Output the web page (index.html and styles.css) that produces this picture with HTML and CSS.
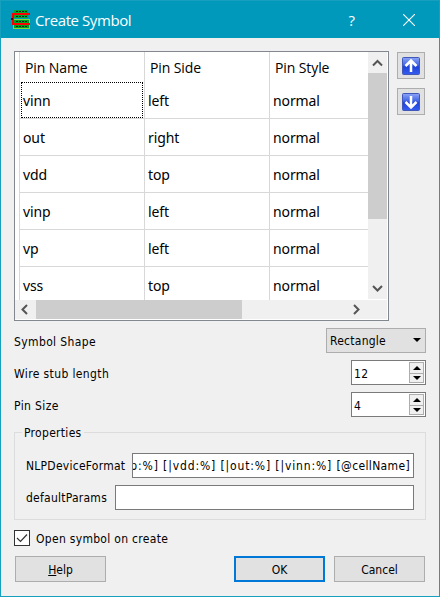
FILE: index.html
```
<!DOCTYPE html>
<html lang="en">
<head>
<meta charset="utf-8">
<title>Create Symbol</title>
<link rel="stylesheet" href="styles.css">
</head>
<body>
<div class="window">
  <header class="titlebar">
    <svg class="logo" width="19" height="20" viewBox="0 0 19 20" shape-rendering="crispEdges">
      <path fill="#00a82d" d="M3 0h14v8H3z"/><path fill="#80d940" d="M2 9h17v10H2z"/><path fill="#00a020" d="M3 10h15v8H3z"/>
      <path stroke="#222" stroke-width="1" stroke-dasharray="2 1" d="M5 1.500h11M5 6.500h11M5 11.500h11M5 16.500h11"/>
      <path fill="none" stroke="#f00" stroke-width="2" d="M19 4H2v10h17"/><path fill="#600" d="M0 8h2v2H0z"/>
    </svg>
    <h1>Create Symbol</h1>
    <span class="question">?</span>
    <svg class="close" width="12" height="12" viewBox="0 0 12 12"><path d="M0 0l12 12M12 0L0 12" stroke="#fff" stroke-width="1.1"/></svg>
  </header>
  <main>
    <section class="pins">
      <div class="list">
        <div class="grid">
          <div class="head">Pin Name</div><div class="head">Pin Side</div><div class="head">Pin Style</div>
          <div class="current">vinn</div><div>left</div><div>normal</div>
          <div>out</div><div>right</div><div>normal</div>
          <div>vdd</div><div>top</div><div>normal</div>
          <div>vinp</div><div>left</div><div>normal</div>
          <div>vp</div><div>left</div><div>normal</div>
          <div>vss</div><div>top</div><div>normal</div>
        </div>
        <div class="vscroll">
          <svg width="19" height="21"><path d="M5 13.500l4.500-4.500 4.500 4.500"/></svg>
          <div class="thumb"></div>
          <svg class="end" width="19" height="21"><path d="M5 8l4.500 4.500L14 8"/></svg>
        </div>
        <div class="hscroll">
          <svg width="21" height="19"><path d="M12 5L7.500 9.500 12 14"/></svg>
          <div class="thumb"></div>
          <svg class="end" width="21" height="19"><path d="M7 5l4.500 4.500L7 14"/></svg>
        </div>
        <div class="corner"></div>
      </div>
      <div class="movers">
        <button><svg width="18" height="18" viewBox="0 0 18 18"><defs><linearGradient id="blue" x2="0" y2="1"><stop stop-color="#8ca5f5"/><stop offset=".45" stop-color="#4264e5"/><stop offset=".55" stop-color="#1d43d8"/><stop offset="1" stop-color="#365cf0"/></linearGradient></defs><rect x=".5" y=".5" width="17" height="17" rx="1" fill="url(#blue)" stroke="#4058b8"/><path class="arrow" d="M9 15V4M3.500 9L9 3.500 14.500 9"/></svg></button>
        <button><svg width="18" height="18" viewBox="0 0 18 18"><rect x=".5" y=".5" width="17" height="17" rx="1" fill="url(#blue)" stroke="#4058b8"/><path class="arrow" d="M9 3v11M3.500 9L9 14.500 14.500 9"/></svg></button>
      </div>
    </section>
    <div class="row"><span>Symbol Shape</span><div class="combo"><span>Rectangle</span><svg width="8" height="4"><path d="M0 0h8L4 4z"/></svg></div></div>
    <div class="row"><span>Wire stub length</span><div class="spin"><span>12</span><div class="steps"><i><svg width="8" height="4"><path d="M0 4h8L4 0z"/></svg></i><i><svg width="8" height="4"><path d="M0 0h8L4 4z"/></svg></i></div></div></div>
    <div class="row"><span>Pin Size</span><div class="spin"><span>4</span><div class="steps"><i><svg width="8" height="4"><path d="M0 4h8L4 0z"/></svg></i><i><svg width="8" height="4"><path d="M0 0h8L4 4z"/></svg></i></div></div></div>
    <fieldset>
      <legend>Properties</legend>
      <div class="field"><label class="nlp">NLPDeviceFormat</label><div class="input"><span><span class="ports">p:%] [|vdd:%] [|out:%] [|vinn:%] </span>[@cellName]</span></div></div>
      <div class="field"><label class="params">defaultParams</label><div class="input"></div></div>
    </fieldset>
    <div class="check"><span class="box"><svg width="14" height="14"><path d="M2 7l3.500 3.500L12 3.500" fill="none" stroke="#333" stroke-width="1.200"/></svg></span><span>Open symbol on create</span></div>
    <footer><button><span><u>H</u>elp</span></button><button class="ok">OK</button><button>Cancel</button></footer>
  </main>
</div>
</body>
</html>
```
FILE: styles.css
```
* { box-sizing: border-box; }
body { margin: 0; font: 12px/16px "DejaVu Sans Condensed", "DejaVu Sans", sans-serif; font-stretch: condensed; color: #000; }
svg { display: block; flex: none; }
.window { width: 440px; height: 597px; border: 1px solid #16a0be; background: #f0f0f0; }
.titlebar { height: 37px; background: #0099bc; display: flex; align-items: center; padding: 0 24px 0 10px; color: #fff; font-family: "Open Sans", sans-serif; font-stretch: normal; }
.titlebar h1 { margin: 0 0 0 5px; font-size: 15px; font-weight: 400; letter-spacing: -.42px; flex: 1; }
.question { font-size: 15px; margin-right: 48px; }
main { padding: 13px 13px 0; }
.pins { display: flex; gap: 8px; }
.list { width: 375px; height: 270px; border: 1px solid #828790; background: #fff; display: grid; grid-template: 248px 20px / 353px 20px; }
.grid { margin-left: 4px; overflow: hidden; display: grid; grid-template-columns: 125px 125px 99px; grid-template-rows: 30px repeat(6, 37px); font: 14px/38px "Noto Sans", sans-serif; letter-spacing: -.1px; }
.grid div { border-left: 1px solid #d8d8d8; border-bottom: 1px solid #d8d8d8; padding-left: 3px; }
.grid .head { border-bottom: 0; padding-left: 5px; font: 14px/32px "Open Sans", sans-serif; }
.grid .current { position: relative; }
.current::after { content: ""; position: absolute; inset: 0 1px 0 1px; border: 1px dotted #000; }
.vscroll { width: 19px; height: 247px; background: #f0f0f0; display: flex; flex-direction: column; }
.hscroll { grid-column: 1; height: 19px; background: #f0f0f0; display: flex; }
.corner { width: 19px; height: 19px; background: #f0f0f0; }
.vscroll path, .hscroll path { fill: none; stroke: #555; stroke-width: 2; }
.thumb { background: #cdcdcd; }
.vscroll .thumb { height: 146px; }
.hscroll .thumb { width: 206px; }
.vscroll .end { margin-top: auto; }
.hscroll .end { margin-left: auto; }
button { border: 1px solid #adadad; background: #e1e1e1; padding: 0; font: inherit; color: #000; }
.movers { display: flex; flex-direction: column; gap: 9px; padding-top: 1px; }
.movers button { width: 28px; height: 27px; display: grid; place-items: center; }
.arrow { fill: none; stroke: #fff; stroke-width: 2.5; }
.row { height: 25px; margin-top: 7px; display: flex; justify-content: space-between; align-items: center; }
.row > span { padding-top: 2px; letter-spacing: .38px; }
.combo { width: 100px; height: 25px; border: 1px solid #adadad; background: #e1e1e1; display: flex; align-items: center; justify-content: space-between; padding: 1px 4px 0 3px; letter-spacing: .25px; }
.combo svg { margin-top: -3px; }
.spin { width: 75px; height: 25px; border: 1px solid #7a7a7a; background: #fff; display: flex; align-items: center; justify-content: space-between; padding-left: 2px; padding-right: 1px; letter-spacing: .4px; }
.spin span { padding-top: 2px; }
.steps { width: 15px; height: 21px; border: 1px solid #adadad; background: #f0f0f0; display: grid; grid-template-rows: 10px 9px; }
.steps i { display: grid; place-items: center; }
.steps i + i { border-top: 1px solid #adadad; }
fieldset { margin: 7px 0 0; border: 1px solid #dcdcdc; padding: 12px 11px 10px; height: 96px; min-width: 0; }
legend { margin-left: -4px; padding: 0 2px; height: 17px; line-height: 19px; letter-spacing: .3px; }
.field { display: flex; height: 25px; }
.field + .field { margin-top: 7px; }
.field label { flex: none; line-height: 27px; letter-spacing: .25px; }
.nlp { width: 106px; }
.params { width: 89px; }
.input { flex: 1; border: 1px solid #7a7a7a; background: #fff; overflow: hidden; display: flex; justify-content: flex-end; padding-right: 3px; min-width: 0; letter-spacing: .35px; }
.input span { white-space: pre; line-height: 25px; }
.ports { letter-spacing: .87px; }
.check { margin-top: 10px; height: 16px; display: flex; align-items: center; gap: 6px; letter-spacing: .3px; }
.box { width: 16px; height: 16px; border: 1px solid #333; background: #fff; }
.check span + span { padding-top: 1px; }
footer { display: flex; margin: 10px 0 0 1px; gap: 9px; }
footer button { width: 91px; height: 26px; padding-top: 1px; }
footer .ok { margin-left: auto; border: 2px solid #0078d7; }
footer button:last-child { margin-right: 1px; }
```
